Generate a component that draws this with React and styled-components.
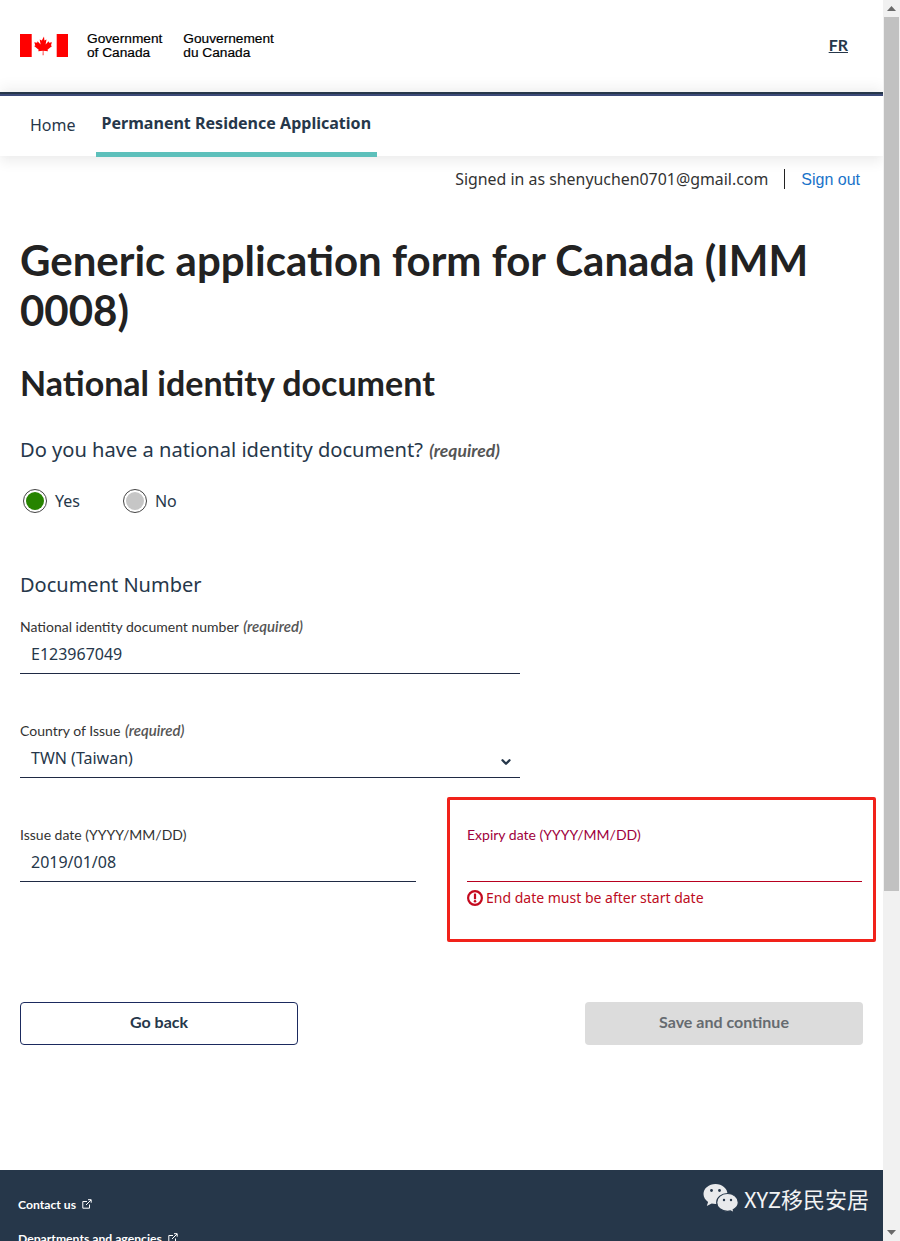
import React from 'react'
import styled, { createGlobalStyle } from 'styled-components'
import { FiChevronDown } from 'react-icons/fi'

const GlobalStyle = createGlobalStyle`
  html, body {
    margin: 0;
    padding: 0;
    height: 1241px;
    overflow: hidden;
    background: #fff;
  }
  * { box-sizing: border-box; }
`

const Shell = styled.div`
  display: flex;
  width: 900px;
  height: 1241px;
  overflow: hidden;
`

const Page = styled.div`
  position: relative;
  width: 883px;
  height: 1241px;
  overflow: hidden;
  display: flex;
  flex-direction: column;
`

const ScrollBar = styled.div`
  width: 17px;
  height: 1241px;
  background: #f1f1f1;
  display: flex;
  flex-direction: column;
  align-items: center;
  justify-content: space-between;
`

const ScrollArrow = styled.div`
  width: 17px;
  height: 17px;
  display: flex;
  align-items: center;
  justify-content: center;
  flex-shrink: 0;
`

const ScrollTrack = styled.div`
  flex: 1;
  width: 17px;
`

const ScrollThumb = styled.div`
  width: 15px;
  height: 874px;
  margin: 0 auto;
  background: #c1c1c1;
`

const TopBar = styled.header`
  height: 92px;
  flex-shrink: 0;
  display: flex;
  align-items: flex-start;
  justify-content: space-between;
  padding: 32px 35px 0 20px;
  background: #fff;
`

const Signature = styled.div`
  display: flex;
  align-items: flex-start;
`

const FlagWrap = styled.div`
  margin-top: 2px;
  height: 24px;
`

const SignatureText = styled.div`
  font-family: "Liberation Sans", Arial, sans-serif;
  font-size: 13.7px;
  line-height: 13.5px;
  color: #000;
  -webkit-text-stroke: 0.2px #000;
  margin-left: ${p => p.$gap}px;
`

const Lang = styled.a`
  font-family: "Lato", sans-serif;
  font-size: 16px;
  font-weight: 700;
  line-height: 26px;
  color: #26374a;
  text-decoration: underline;
`

const NavBar = styled.nav`
  height: 64px;
  flex-shrink: 0;
  display: flex;
  align-items: stretch;
  background: #fff;
  border-top: 4px solid #3c4a78;
  box-shadow: 0 6px 12px rgba(0, 0, 0, 0.07), 0 -6px 12px rgba(0, 0, 0, 0.05);
  padding-left: 20px;
  padding-bottom: 4px;
  position: relative;
  z-index: 2;

  &::before {
    content: '';
    position: absolute;
    left: 0;
    right: 0;
    top: -4px;
    height: 2px;
    background: #26374a;
  }
`

const NavItem = styled.a`
  font-family: "Noto Sans", sans-serif;
  font-size: ${p => (p.$active ? '16.05px' : '16px')};
  font-weight: ${p => (p.$active ? 700 : 400)};
  color: #26374a;
  display: flex;
  align-items: ${p => (p.$active ? 'flex-start' : 'center')};
  padding: ${p => (p.$active ? '16px 6px 0' : '2px 10px 0')};
  margin-left: ${p => (p.$active ? '10px' : '0')};
  margin-bottom: -5px;
  border-bottom: ${p => (p.$active ? '5px solid #5dc0bb' : '5px solid transparent')};
`

const Main = styled.main`
  flex: 1;
  padding: 0 20px;
  display: flex;
  flex-direction: column;
  background: #fff;
`

const SessionRow = styled.div`
  display: flex;
  justify-content: flex-end;
  align-items: center;
  height: 20px;
  margin-top: 13px;
  padding-right: 3px;
  font-family: "Noto Sans", sans-serif;
  font-size: 15.9px;
  color: #333;
`

const SessionDivider = styled.span`
  width: 1px;
  height: 20px;
  background: #222;
  margin: 0 16px;
`

const SignOut = styled.a`
  font-family: "Liberation Sans", Arial, sans-serif;
  font-size: 16px;
  padding-top: 1px;
  color: #1a73c9;
`

const PageTitle = styled.h1`
  font-family: "Lato", sans-serif;
  font-size: 42px;
  font-weight: 700;
  line-height: 50px;
  color: #222;
  margin: 46px 0 0;
`

const SectionTitle = styled.h2`
  font-family: "Lato", sans-serif;
  font-size: 34px;
  font-weight: 700;
  line-height: 42px;
  color: #222;
  margin: 27px 0 0;
`

const Question = styled.div`
  font-family: "Noto Sans", sans-serif;
  font-size: 20.1px;
  line-height: 28px;
  color: #26374a;
  margin-top: 32px;
`

const Required = styled.em`
  font-family: "Lato", sans-serif;
  font-weight: ${p => (p.$bold ? 700 : 600)};
  font-size: ${p => p.$size || 15}px;
  line-height: 1;
  margin-left: 1px;
  color: #555;
  font-style: italic;
`

const RadioRow = styled.div`
  display: flex;
  gap: 43px;
  margin-top: 25px;
  padding-left: 3px;
`

const RadioLabel = styled.label`
  display: flex;
  align-items: center;
  gap: 8px;
  font-family: "Noto Sans", sans-serif;
  font-size: 16px;
  line-height: 24px;
  color: #26374a;
`

const RadioOuter = styled.span`
  width: 24px;
  height: 24px;
  border-radius: 50%;
  border: 1.5px solid #444;
  display: flex;
  align-items: center;
  justify-content: center;
  background: #fff;
`

const RadioDot = styled.span`
  width: 18px;
  height: 18px;
  border-radius: 50%;
  background: ${p => (p.$on ? '#278400' : '#c6c6c6')};
`

const GroupTitle = styled.div`
  font-family: "Noto Sans", sans-serif;
  font-size: 20px;
  line-height: 26px;
  color: #26374a;
  margin-top: 59px;
`

const Field = styled.div`
  width: ${p => p.$width}px;
  margin-top: ${p => p.$top || 0}px;
`

const FieldLabel = styled.div`
  height: 18px;
  font-family: "Lato", sans-serif;
  font-size: 14px;
  line-height: 18px;
  color: ${p => (p.$error ? '#a0003c' : '#333')};
`

const FieldValue = styled.div`
  height: 38px;
  display: flex;
  align-items: center;
  justify-content: space-between;
  padding: 0 7px 2px 11px;
  font-family: "Noto Sans", sans-serif;
  font-size: 16px;
  color: #26374a;
  border-bottom: 1px solid ${p => (p.$error ? '#b8001f' : '#1f2a44')};
`

const SelectArrow = styled(FiChevronDown)`
  margin-top: 8px;
  stroke-width: 4px;
`

const DateRow = styled.div`
  display: flex;
  justify-content: space-between;
  align-items: flex-start;
  margin-top: 19px;
  position: relative;
`

const ErrorBox = styled.div`
  width: 429px;
  height: 145px;
  margin-right: -13px;
  padding: 26px 11px 0 17px;
  border: 3px solid #f1221a;
  border-radius: 2px;
`

const ErrorLine = styled.div`
  display: flex;
  align-items: center;
  gap: 3px;
  margin-top: 6px;
  font-family: "Noto Sans", sans-serif;
  font-size: 14px;
  line-height: 20px;
  color: #bd0b22;
`

const Actions = styled.div`
  display: flex;
  justify-content: space-between;
  margin-top: 60px;
`

const Button = styled.button`
  width: 278px;
  height: 43px;
  padding: 0 0 4px;
  border-radius: 4px;
  border: ${p => (p.$disabled ? 'none' : '1px solid #1b2a5e')};
  background: ${p => (p.$disabled ? '#dcdcdc' : '#fff')};
  color: ${p => (p.$disabled ? '#666b70' : '#26374a')};
  font-family: "Lato", sans-serif;
  font-size: 16px;
  font-weight: 700;
`

const Footer = styled.footer`
  height: 71px;
  flex-shrink: 0;
  background: #26374a;
  padding: 26px 18px 0;
  overflow: hidden;
`

const FooterLink = styled.a`
  display: flex;
  align-items: center;
  gap: 6px;
  height: 16px;
  margin-bottom: 18px;
  font-family: "Lato", sans-serif;
  font-size: 12.2px;
  font-weight: 700;
  color: #fff;
`

const Watermark = styled.div`
  position: absolute;
  left: 703px;
  top: 1183px;
  display: flex;
  align-items: center;
  gap: 5px;
  font-family: "Noto Sans CJK SC", "Open Sans", sans-serif;
  font-size: 22px;
  line-height: 30px;
  color: #f2f3f4;
`

const MapleFlag = () => (
  <svg width="49" height="24" viewBox="0 0 49 24">
    <rect x="0" y="0" width="11.700" height="23" fill="#f00" />
    <rect x="36.700" y="0" width="11.300" height="23" fill="#f00" />
    <path
      fill="#f00"
      d="M24 2.500 l-2.200 4 -2.100-1.100 .9 5 -3-3.200 -.5 1.600 -2.800-.5 1 3.200 -1.200.6 4.600 3.600 -.5 1.600 4.600-.5 -.1 4.500 h.8 l-.1-4.500 4.600.5 -.5-1.600 4.600-3.600 -1.200-.6 1-3.200 -2.800.5 -.5-1.600 -3 3.200 .9-5 -2.100 1.100z"
    />
  </svg>
)

const ExternalIcon = () => (
  <svg width="10" height="10" viewBox="0 0 10 10" fill="none" stroke="#fff" strokeWidth="1">
    <path d="M5 2.500H.8v6.700h6.700V5.500" />
    <path d="M4 6l5-5M6 .7h3.200v3" />
  </svg>
)

const ErrorIcon = () => (
  <svg width="16" height="16" viewBox="0 0 16 16">
    <circle cx="8" cy="8" r="6.900" fill="none" stroke="#c40a1e" strokeWidth="2.200" />
    <rect x="6.900" y="3.500" width="2.200" height="5.800" rx="0.6" fill="#c40a1e" />
    <circle cx="8" cy="11.300" r="1.250" fill="#c40a1e" />
  </svg>
)

const WeChatIcon = () => (
  <svg width="36" height="30" viewBox="0 0 36 30">
    <path
      fill="#e9eaec"
      d="M12.500 1C5.900 1 .5 5.400 .5 11c0 3.200 1.800 6 4.600 7.900L3.800 23l4.900-2.600c1.200.3 2.500.5 3.800.5 6.600 0 12-4.400 12-9.900S19.100 1 12.500 1z"
    />
    <path
      fill="#e9eaec"
      stroke="#26374a"
      strokeWidth="1.200"
      d="M24.500 10.500c-6 0-10.800 4-10.800 8.900s4.800 8.900 10.800 8.900c1 0 2-.1 2.900-.4l3.800 1.900-1-3.100c2.800-1.600 5.100-4.200 5.100-7.300 0-4.900-4.800-8.900-10.800-8.900z"
    />
    <circle cx="8.500" cy="7.500" r="1.400" fill="#26374a" />
    <circle cx="16.500" cy="7.500" r="1.400" fill="#26374a" />
    <circle cx="21" cy="17" r="1.200" fill="#26374a" />
    <circle cx="28" cy="17" r="1.200" fill="#26374a" />
  </svg>
)

const Triangle = ({ up }) => (
  <svg width="9" height="5" viewBox="0 0 9 5">
    <path d={up ? 'M4.500 0L9 5H0z' : 'M0 0h9L4.500 5z'} fill="#6a6a6a" />
  </svg>
)

export default function App() {
  return (
    <Shell>
      <GlobalStyle />
      <Page>
        <TopBar>
          <Signature>
            <FlagWrap><MapleFlag /></FlagWrap>
            <SignatureText $gap={18}>Government<br />of Canada</SignatureText>
            <SignatureText $gap={21}>Gouvernement<br />du Canada</SignatureText>
          </Signature>
          <Lang>FR</Lang>
        </TopBar>
        <NavBar>
          <NavItem>Home</NavItem>
          <NavItem $active>Permanent Residence Application</NavItem>
        </NavBar>
        <Main>
          <SessionRow>
            Signed in as shenyuchen0701@gmail.com
            <SessionDivider />
            <SignOut>Sign out</SignOut>
          </SessionRow>
          <PageTitle>Generic application form for Canada (IMM 0008)</PageTitle>
          <SectionTitle>National identity document</SectionTitle>
          <Question>
            Do you have a national identity document? <Required $bold $size={17.5}>(required)</Required>
          </Question>
          <RadioRow>
            <RadioLabel><RadioOuter><RadioDot $on /></RadioOuter>Yes</RadioLabel>
            <RadioLabel><RadioOuter><RadioDot /></RadioOuter>No</RadioLabel>
          </RadioRow>
          <GroupTitle>Document Number</GroupTitle>
          <Field $width={500} $top={20}>
            <FieldLabel>National identity document number <Required>(required)</Required></FieldLabel>
            <FieldValue>E123967049</FieldValue>
          </Field>
          <Field $width={500} $top={48}>
            <FieldLabel>Country of Issue <Required>(required)</Required></FieldLabel>
            <FieldValue>TWN (Taiwan)<SelectArrow size={14} color="#26374a" /></FieldValue>
          </Field>
          <DateRow>
            <Field $width={396} $top={29}>
              <FieldLabel>Issue date (YYYY/MM/DD)</FieldLabel>
              <FieldValue>2019/01/08</FieldValue>
            </Field>
            <ErrorBox>
              <FieldLabel $error>Expiry date (YYYY/MM/DD)</FieldLabel>
              <FieldValue $error />
              <ErrorLine><ErrorIcon />End date must be after start date</ErrorLine>
            </ErrorBox>
          </DateRow>
          <Actions>
            <Button>Go back</Button>
            <Button $disabled>Save and continue</Button>
          </Actions>
        </Main>
        <Footer>
          <FooterLink>Contact us <ExternalIcon /></FooterLink>
          <FooterLink>Departments and agencies <ExternalIcon /></FooterLink>
        </Footer>
        <Watermark><WeChatIcon />XYZ移民安居</Watermark>
      </Page>
      <ScrollBar>
        <ScrollArrow><Triangle up /></ScrollArrow>
        <ScrollTrack><ScrollThumb /></ScrollTrack>
        <ScrollArrow><Triangle /></ScrollArrow>
      </ScrollBar>
    </Shell>
  )
}
